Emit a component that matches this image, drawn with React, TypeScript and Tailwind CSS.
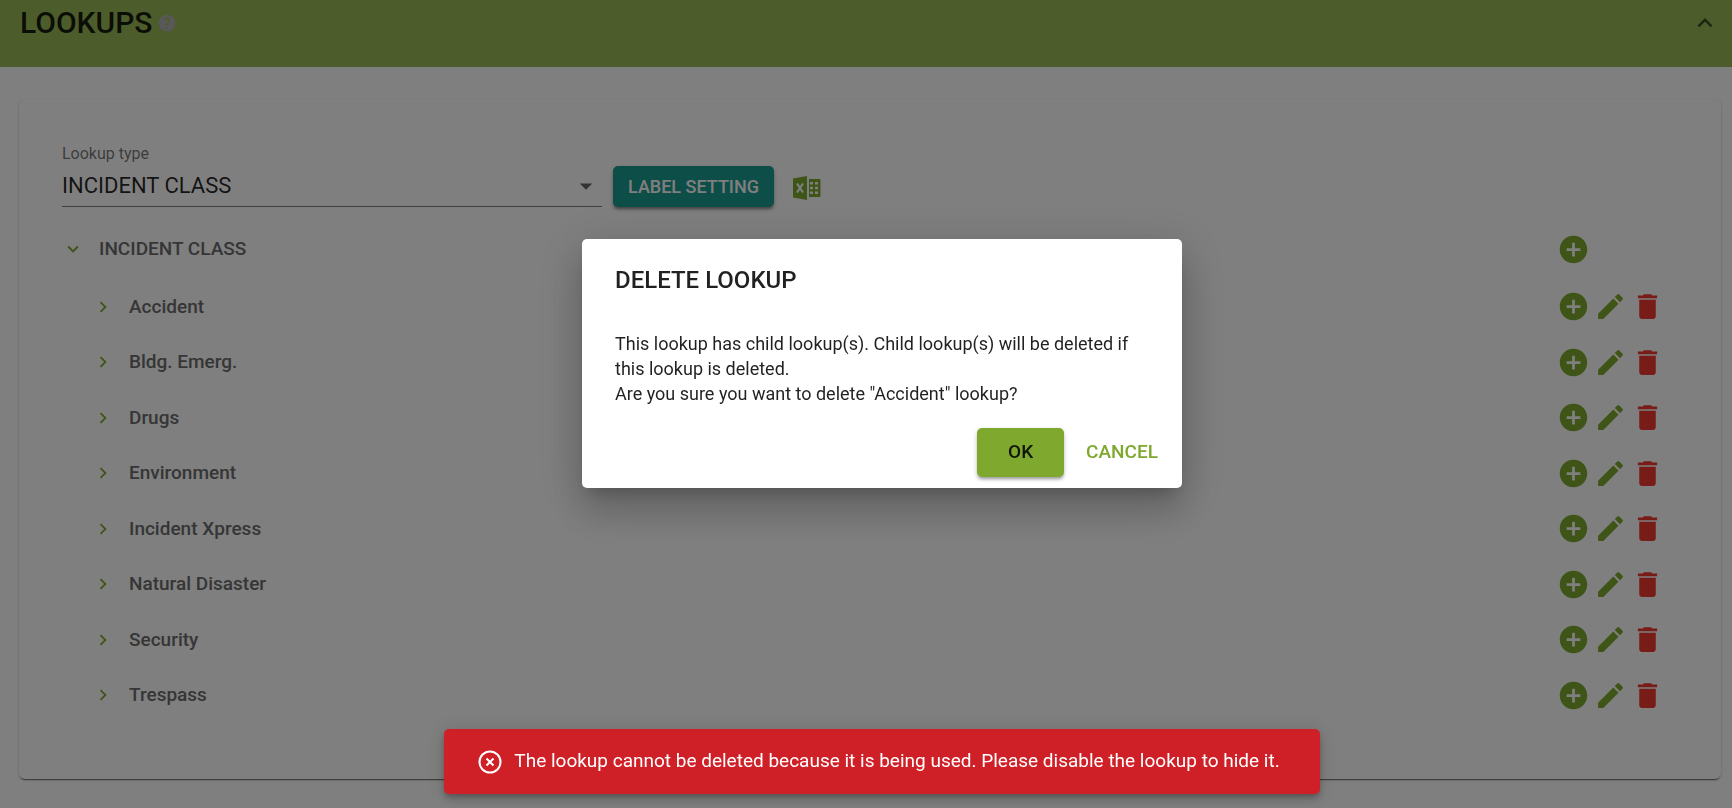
import React, { ButtonHTMLAttributes, useState } from 'react';
import {
  MdAddCircle,
  MdArrowDropDown,
  MdChevronRight,
  MdDelete,
  MdEdit,
  MdExpandLess,
  MdExpandMore,
  MdHelp,
} from 'react-icons/md';

const LOOKUPS = [
  'Accident',
  'Bldg. Emerg.',
  'Drugs',
  'Environment',
  'Incident Xpress',
  'Natural Disaster',
  'Security',
  'Trespass',
];

interface IconButtonProps extends ButtonHTMLAttributes<HTMLButtonElement> {
  label: string;
}

const IconButton = ({ label, className = '', children, ...props }: IconButtonProps) => (
  <button
    type="button"
    aria-label={label}
    className={`flex shrink-0 items-center justify-center ${className}`}
    {...props}
  >
    {children}
  </button>
);

const ExcelIcon = () => (
  <svg viewBox="0 0 28 24" className="h-6 w-7" aria-hidden="true">
    <path d="M0 2.500 14 0v24L0 21.500Z" fill="currentColor" />
    <path d="M16 3h10.500c.6 0 1 .4 1 1v16c0 .6-.4 1-1 1H16Z" fill="currentColor" />
    <path
      d="M17 6h3v2.500h-3zM22 6h3v2.500h-3zM17 10.800h3v2.500h-3zM22 10.800h3v2.500h-3zM17 15.600h3v2.500h-3zM22 15.600h3v2.500h-3z"
      fill="#fff"
    />
    <path d="m4 7.500 6 9M10 7.500l-6 9" stroke="#fff" strokeWidth="2.200" />
  </svg>
);

const ErrorIcon = () => (
  <svg viewBox="0 0 24 24" className="size-6 shrink-0" fill="none" stroke="currentColor" strokeWidth="2" aria-hidden="true">
    <circle cx="12" cy="12" r="10.500" />
    <path d="m8.500 8.500 7 7M15.500 8.500l-7 7" />
  </svg>
);

interface RowActionsProps {
  name: string;
  root?: boolean;
}

const RowActions = ({ name, root = false }: RowActionsProps) => (
  <div className="flex w-[107px] gap-1">
    <IconButton label={`Add to ${name}`} className="text-[#7ea82e]">
      <MdAddCircle size={33} />
    </IconButton>
    {!root && (
      <>
        <IconButton label={`Edit ${name}`} className="text-[#7ea82e]">
          <MdEdit size={33} />
        </IconButton>
        <IconButton label={`Delete ${name}`} className="text-[#f0382e]">
          <MdDelete size={33} />
        </IconButton>
      </>
    )}
  </div>
);

const PageHeader = () => (
  <header className="flex h-[67px] items-start justify-between bg-[#98b856] pr-3 pl-5">
    <div className="flex items-center gap-1 pt-[5px]">
      <h1 className="text-[30px] leading-9 font-medium text-black/85">LOOKUPS</h1>
      <MdHelp size={20} className="text-[#b0b0b0]" />
    </div>
    <IconButton label="Collapse" className="mt-2 text-black/60">
      <MdExpandLess size={30} />
    </IconButton>
  </header>
);

const LookupToolbar = () => (
  <div className="flex items-end gap-[11px]">
    <div className="w-[540px]">
      <label htmlFor="lookup-type" className="block text-base leading-5 text-black/55">
        Lookup type
      </label>
      <div className="relative border-b border-black/50">
        <select
          id="lookup-type"
          className="block h-[42px] w-full appearance-none bg-transparent text-[22px] text-black/85"
        >
          <option>INCIDENT CLASS</option>
        </select>
        <MdArrowDropDown size={30} className="pointer-events-none absolute top-[7px] right-px text-black/60" />
      </div>
    </div>
    <button
      type="button"
      className="h-[41px] rounded-[5px] bg-[#1c9c90] px-[15px] text-lg font-medium text-white shadow-[0_3px_3px_-1px_rgba(0,0,0,0.35),0_2px_5px_rgba(0,0,0,0.2)]"
    >
      LABEL SETTING
    </button>
    <IconButton label="Export to Excel" className="mb-[7px] ml-2 text-[#7ea82e]">
      <ExcelIcon />
    </IconButton>
  </div>
);

const LookupTree = () => (
  <div className="pt-3 text-[#6c6c6c]">
    <div className="flex h-[60px] items-center">
      <IconButton label="Collapse INCIDENT CLASS" className="text-[#7ea82e]">
        <MdExpandMore size={22} />
      </IconButton>
      <span className="ml-[15px] grow text-[19px] font-medium">INCIDENT CLASS</span>
      <RowActions name="INCIDENT CLASS" root />
    </div>
    <ul className="grid min-h-[444px] auto-rows-fr pl-[30px]">
      {LOOKUPS.map((name) => (
        <li key={name} className="flex items-center">
          <IconButton label={`Expand ${name}`} className="text-[#7ea82e]">
            <MdChevronRight size={22} />
          </IconButton>
          <span className="ml-[15px] grow text-[19px] font-medium">{name}</span>
          <RowActions name={name} />
        </li>
      ))}
    </ul>
  </div>
);

interface DeleteDialogProps {
  name: string;
  onClose: () => void;
}

const DeleteDialog = ({ name, onClose }: DeleteDialogProps) => (
  <div
    role="dialog"
    aria-modal="true"
    aria-labelledby="delete-title"
    className="w-full max-w-[600px] rounded-[5px] bg-white px-[33px] pt-[25px] pb-[11px] text-black/87 shadow-[0_11px_15px_-7px_rgba(0,0,0,0.2),0_24px_38px_3px_rgba(0,0,0,0.14),0_9px_46px_8px_rgba(0,0,0,0.12)]"
  >
    <h2 id="delete-title" className="text-2xl font-medium">
      DELETE LOOKUP
    </h2>
    <p className="pt-[35px] text-lg leading-[25px]">
      This lookup has child lookup(s). Child lookup(s) will be deleted if this lookup is deleted.
      <br />
      Are you sure you want to delete "{name}" lookup?
    </p>
    <div className="-mr-[33px] flex justify-end gap-[22px] pt-[22px] pr-6">
      <button
        type="button"
        onClick={onClose}
        className="h-[49px] w-[87px] rounded-[5px] bg-[#7ea82e] text-[19px] font-medium shadow-[0_3px_3px_-1px_rgba(0,0,0,0.25),0_2px_5px_rgba(0,0,0,0.2)]"
      >
        OK
      </button>
      <button type="button" onClick={onClose} className="text-[19px] font-medium text-[#7ea82e]">
        CANCEL
      </button>
    </div>
  </div>
);

const App = () => {
  const [open, setOpen] = useState(true);

  return (
    <div className="min-h-screen bg-white font-[Roboto,sans-serif]">
      <PageHeader />
      <main className="pt-8 pr-[11px] pb-7 pl-[19px]">
        <section className="rounded-md pt-[45px] pr-[57px] pb-14 pl-[43px] shadow-[0_2px_1px_-1px_rgba(0,0,0,0.5),0_1px_3px_rgba(0,0,0,0.2)]">
          <LookupToolbar />
          <LookupTree />
        </section>
      </main>

      {open && (
        <div className="fixed inset-0 flex items-start justify-center bg-black/50 pt-[239px] pl-8">
          <DeleteDialog name="Accident" onClose={() => setOpen(false)} />
        </div>
      )}

      <div className="pointer-events-none fixed inset-x-0 bottom-[14px] flex justify-center pl-8">
        <div
          role="alert"
          className="flex h-[65px] items-center gap-3 rounded-[5px] bg-[#d02027] pr-10 pl-[34px] text-[19px] text-white shadow-[0_3px_5px_-1px_rgba(0,0,0,0.2),0_6px_10px_rgba(0,0,0,0.14),0_1px_18px_rgba(0,0,0,0.12)]"
        >
          <ErrorIcon />
          The lookup cannot be deleted because it is being used. Please disable the lookup to hide it.
        </div>
      </div>
    </div>
  );
};

export default App;
